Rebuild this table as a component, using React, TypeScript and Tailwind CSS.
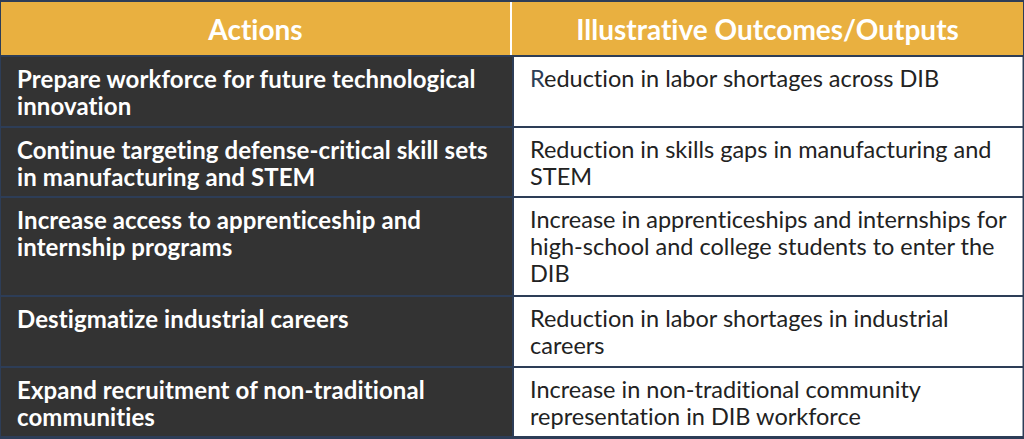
import clsx from 'clsx';

const rows = [
  {
    action: 'Prepare workforce for future technological innovation',
    outcome: 'Reduction in labor shortages across DIB',
    h: 'h-[69px]',
    firstNavy: true,
  },
  {
    action: 'Continue targeting defense-critical skill sets in manufacturing and STEM',
    outcome: 'Reduction in skills gaps in manufacturing and STEM',
    h: 'h-[68px]',
  },
  {
    action: 'Increase access to apprenticeship and internship programs',
    outcome:
      'Increase in apprenticeships and internships for high-school and college students to enter the DIB',
    h: 'h-[97px]',
  },
  {
    action: 'Destigmatize industrial careers',
    outcome: 'Reduction in labor shortages in industrial careers',
    h: 'h-[69px]',
  },
  {
    action: 'Expand recruitment of non-traditional communities',
    outcome: 'Increase in non-traditional community representation in DIB workforce',
    h: 'h-[68px]',
  },
];

export default function App() {
  return (
    <div
      className="flex h-[439px] w-[1024px] flex-col gap-[2px] bg-[#2d3d57] pb-[2px] pl-[1px] pr-[1px] pt-[2px] [font-variant-ligatures:none]"
      style={{ fontFamily: 'Lato, "Open Sans", sans-serif' }}
    >
      {/* header */}
      <div className="flex h-[53px] bg-[#e9b040] text-[28px] font-bold text-white">
        <div className="flex w-[511px] items-center justify-center border-r-2 border-white">
          Actions
        </div>
        <div className="flex flex-1 items-center justify-center">
          Illustrative Outcomes/Outputs
        </div>
      </div>

      {rows.map((row) => (
        <div key={row.action} className={clsx('flex gap-[2px]', row.h)}>
          <div className="w-[511px] bg-[#333333] pl-4 pr-3 pt-[8px] text-[24px] font-bold leading-[27px] tracking-[0.1px] text-white">
            {row.action}
          </div>
          <div className="flex-1 border-r border-[#9aa3b0] bg-white pl-4 pr-2 pt-[8px] text-[23.5px] leading-[27px] text-[#222222]">
            {row.firstNavy ? (
              <>
                <span className="text-[#2d3d57]">R</span>
                {row.outcome.slice(1)}
              </>
            ) : (
              row.outcome
            )}
          </div>
        </div>
      ))}
    </div>
  );
}
